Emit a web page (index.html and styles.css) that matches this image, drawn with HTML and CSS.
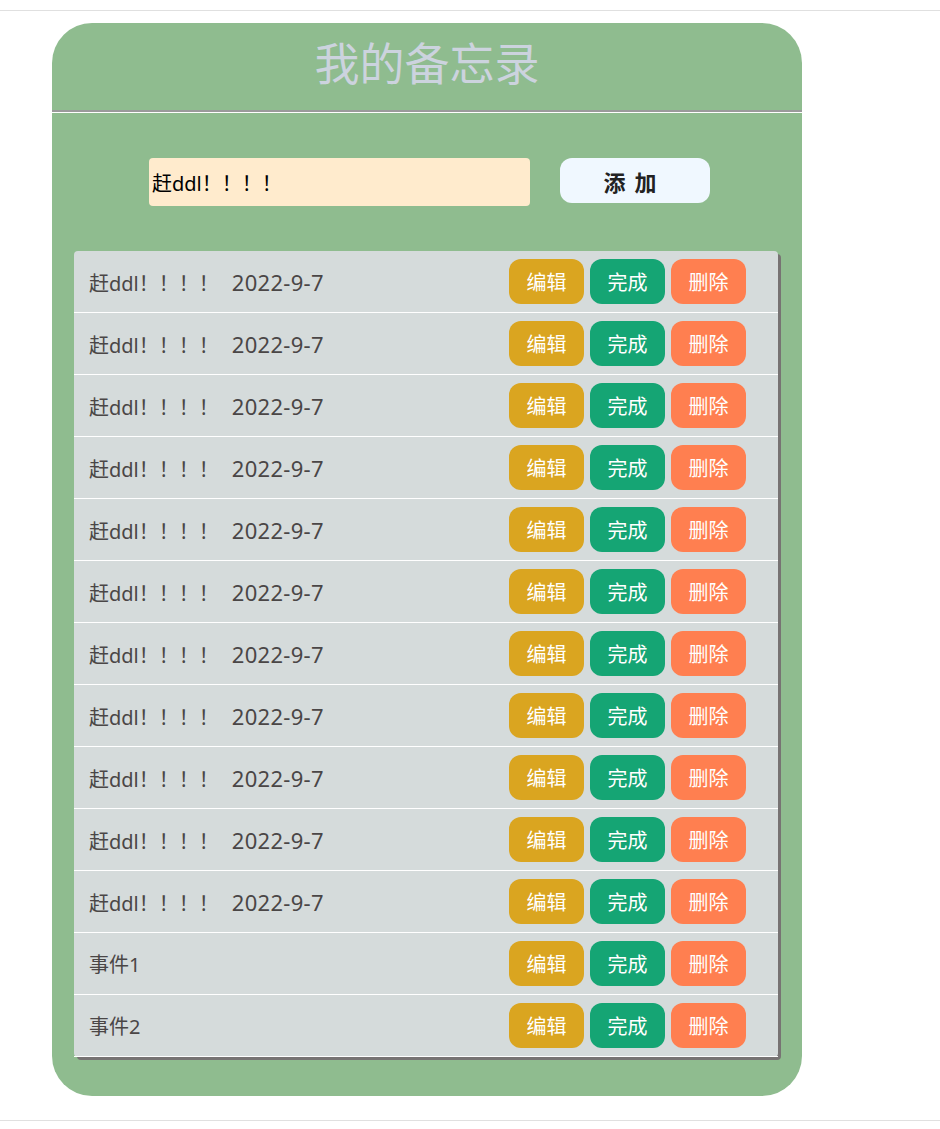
FILE: index.html
```html
<!DOCTYPE html>
<html lang="zh">
<head>
<meta charset="utf-8">
<title>我的备忘录</title>
<link rel="stylesheet" href="styles.css">
</head>
<body>
<div class="page">
  <div class="memo">
    <div class="memo-header"><h1 class="title">我的备忘录</h1></div>
    <div class="divider"></div>
    <div class="add-row">
      <div class="input">赶ddl！！！！</div>
      <button class="add-btn">添 加</button>
    </div>
    <ul class="list">
      <li class="item"><span class="text">赶ddl！！！！<span class="date">2022-9-7</span></span><span class="actions"><button class="btn edit">编辑</button><button class="btn done">完成</button><button class="btn del">删除</button></span></li>
      <li class="item"><span class="text">赶ddl！！！！<span class="date">2022-9-7</span></span><span class="actions"><button class="btn edit">编辑</button><button class="btn done">完成</button><button class="btn del">删除</button></span></li>
      <li class="item"><span class="text">赶ddl！！！！<span class="date">2022-9-7</span></span><span class="actions"><button class="btn edit">编辑</button><button class="btn done">完成</button><button class="btn del">删除</button></span></li>
      <li class="item"><span class="text">赶ddl！！！！<span class="date">2022-9-7</span></span><span class="actions"><button class="btn edit">编辑</button><button class="btn done">完成</button><button class="btn del">删除</button></span></li>
      <li class="item"><span class="text">赶ddl！！！！<span class="date">2022-9-7</span></span><span class="actions"><button class="btn edit">编辑</button><button class="btn done">完成</button><button class="btn del">删除</button></span></li>
      <li class="item"><span class="text">赶ddl！！！！<span class="date">2022-9-7</span></span><span class="actions"><button class="btn edit">编辑</button><button class="btn done">完成</button><button class="btn del">删除</button></span></li>
      <li class="item"><span class="text">赶ddl！！！！<span class="date">2022-9-7</span></span><span class="actions"><button class="btn edit">编辑</button><button class="btn done">完成</button><button class="btn del">删除</button></span></li>
      <li class="item"><span class="text">赶ddl！！！！<span class="date">2022-9-7</span></span><span class="actions"><button class="btn edit">编辑</button><button class="btn done">完成</button><button class="btn del">删除</button></span></li>
      <li class="item"><span class="text">赶ddl！！！！<span class="date">2022-9-7</span></span><span class="actions"><button class="btn edit">编辑</button><button class="btn done">完成</button><button class="btn del">删除</button></span></li>
      <li class="item"><span class="text">赶ddl！！！！<span class="date">2022-9-7</span></span><span class="actions"><button class="btn edit">编辑</button><button class="btn done">完成</button><button class="btn del">删除</button></span></li>
      <li class="item"><span class="text">赶ddl！！！！<span class="date">2022-9-7</span></span><span class="actions"><button class="btn edit">编辑</button><button class="btn done">完成</button><button class="btn del">删除</button></span></li>
      <li class="item"><span class="text">事件1</span><span class="actions"><button class="btn edit">编辑</button><button class="btn done">完成</button><button class="btn del">删除</button></span></li>
      <li class="item"><span class="text">事件2</span><span class="actions"><button class="btn edit">编辑</button><button class="btn done">完成</button><button class="btn del">删除</button></span></li>
    </ul>
  </div>
</div>
</body>
</html>
```
FILE: styles.css
```css
* { box-sizing: border-box; }
html, body { margin: 0; padding: 0; background: #fff; }
body { font-family: "Noto Sans", "Noto Sans CJK SC", sans-serif; }

.page {
  margin-top: 10px;
  border-top: 1px solid #e0e0e0;
  border-bottom: 1px solid #e0e0e0;
  padding: 12px 0 24px 52px;
}

.memo {
  width: 750px;
  background: #8fbc8f;
  border-radius: 40px;
  padding-bottom: 39px;
}

.memo-header {
  height: 87px;
  display: flex;
  justify-content: center;
  align-items: center;
}
.title {
  margin: 0;
  font-family: "Noto Sans CJK SC", sans-serif;
  font-weight: normal;
  font-size: 45px;
  line-height: 1;
  color: #ccd3de;
  position: relative;
  top: -5px;
}

.divider {
  border-top: 2px solid #9a9a9a;
  border-bottom: 1px solid #ffffff;
}

.add-row {
  display: flex;
  align-items: flex-start;
  padding: 45px 0 0 97px;
  gap: 30px;
}
.input {
  width: 381px;
  height: 48px;
  background: #ffebcd;
  border-radius: 4px;
  padding-left: 3px;
  display: flex;
  align-items: center;
  font-family: "Noto Sans", "Noto Sans CJK SC", sans-serif;
  font-size: 20px;
  color: #000;
}
.add-btn {
  width: 150px;
  height: 45px;
  border: none;
  border-radius: 12px;
  background: #f0f8ff;
  font-family: "Noto Sans CJK SC", sans-serif;
  font-size: 22px;
  word-spacing: 4px;
  font-weight: bold;
  color: #222;
  padding: 0 10px 0 0;
}

.list {
  list-style: none;
  margin: 45px 0 0 22px;
  padding: 0;
  width: 704px;
  background: #d5dbdb;
  border-radius: 4px;
  box-shadow: 3px 3px 0 #777373;
}
.item {
  height: 62px;
  border-bottom: 1px solid #ffffff;
  display: flex;
  align-items: center;
  justify-content: space-between;
  padding: 0 32px 0 15px;
}
.text {
  font-size: 20px;
  color: #4a4646;
}
.date {
  margin-left: 13px;
  font-size: 22px;
  letter-spacing: 0.3px;
}
.actions {
  display: flex;
  gap: 6px;
}
.btn {
  width: 75px;
  height: 45px;
  border: none;
  border-radius: 12px;
  color: #fff;
  font-family: "Noto Sans CJK SC", sans-serif;
  font-size: 20px;
  padding: 0;
}
.edit { background: #daa520; }
.done { background: #15a574; }
.del { background: #ff7f50; }
```
